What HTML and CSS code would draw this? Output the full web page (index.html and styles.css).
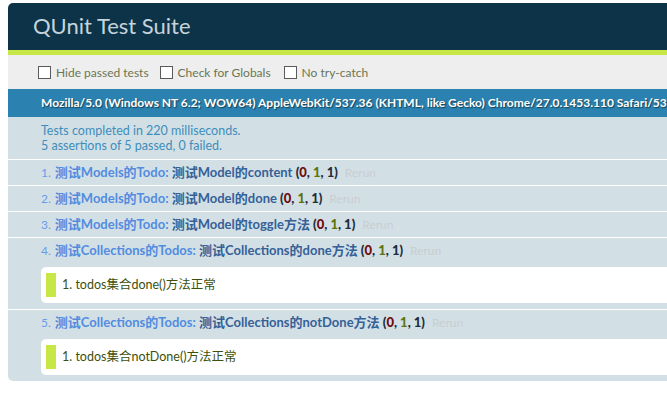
FILE: index.html
```html
<!DOCTYPE html>
<html lang="zh">
<head>
<meta charset="utf-8">
<title>QUnit Test Suite</title>
<link rel="stylesheet" href="styles.css">
</head>
<body>
<div class="suite">
  <h1 class="header">QUnit Test Suite</h1>
  <div class="banner"></div>
  <div class="toolbar">
    <label class="opt"><span class="box"></span>Hide passed tests</label>
    <label class="opt"><span class="box"></span>Check for Globals</label>
    <label class="opt"><span class="box"></span>No try-catch</label>
  </div>
  <div class="useragent">Mozilla/5.0 (Windows NT 6.2; WOW64) AppleWebKit/537.36 (KHTML, like Gecko) Chrome/27.0.1453.110 Safari/537.36</div>
  <div class="result">
    <div>Tests completed in 220 milliseconds.</div>
    <div>5 assertions of 5 passed, 0 failed.</div>
  </div>
  <ol class="tests">
    <li class="test">
      <div class="line"><span class="num">1.</span><strong><span class="module">测试Models的Todo:</span> <span class="name">测试Model的content</span> <b class="counts">(<b class="failed">0</b>, <b class="passed">1</b>, 1)</b></strong><a class="rerun">Rerun</a></div>
    </li>
    <li class="test">
      <div class="line"><span class="num">2.</span><strong><span class="module">测试Models的Todo:</span> <span class="name">测试Model的done</span> <b class="counts">(<b class="failed">0</b>, <b class="passed">1</b>, 1)</b></strong><a class="rerun">Rerun</a></div>
    </li>
    <li class="test">
      <div class="line"><span class="num">3.</span><strong><span class="module">测试Models的Todo:</span> <span class="name">测试Model的toggle方法</span> <b class="counts">(<b class="failed">0</b>, <b class="passed">1</b>, 1)</b></strong><a class="rerun">Rerun</a></div>
    </li>
    <li class="test">
      <div class="line"><span class="num">4.</span><strong><span class="module">测试Collections的Todos:</span> <span class="name">测试Collections的done方法</span> <b class="counts">(<b class="failed">0</b>, <b class="passed">1</b>, 1)</b></strong><a class="rerun">Rerun</a></div>
      <ol class="asserts">
        <li class="assert">1. todos集合done()方法正常</li>
      </ol>
    </li>
    <li class="test last">
      <div class="line"><span class="num">5.</span><strong><span class="module">测试Collections的Todos:</span> <span class="name">测试Collections的notDone方法</span> <b class="counts">(<b class="failed">0</b>, <b class="passed">1</b>, 1)</b></strong><a class="rerun">Rerun</a></div>
      <ol class="asserts">
        <li class="assert">1. todos集合notDone()方法正常</li>
      </ol>
    </li>
  </ol>
</div>
</body>
</html>
```

FILE: styles.css
```css
html, body {
  overflow: hidden;
}
body {
  margin: 3px 0 0 8px;
  background: #fff;
  font-family: Lato, "Noto Sans CJK SC", sans-serif;
  font-size: 13px;
}
.suite {
  width: 760px;
}
.header {
  margin: 0;
  padding: 11px 0 12px 25px;
  font-size: 22px;
  line-height: 24px;
  font-weight: normal;
  color: #c5d3db;
  background: #0d3349;
  border-radius: 5px 0 0 0;
}
.banner {
  height: 5px;
  background: #c6e746;
}
.toolbar {
  height: 34px;
  padding-left: 30px;
  display: flex;
  align-items: center;
  gap: 11px;
  background: #eee;
  color: #6b7553;
  font-size: 12px;
}
.opt {
  display: flex;
  align-items: center;
  gap: 5px;
}
.opt + .opt + .opt {
  margin-left: 2px;
}
.box {
  width: 11px;
  height: 11px;
  border: 1px solid #5a5a5a;
  background: #fff;
}
.useragent {
  height: 28px;
  line-height: 28px;
  padding-left: 33px;
  background: #2b81af;
  color: #fff;
  font-weight: bold;
  font-size: 12px;
  white-space: nowrap;
  text-shadow: 1px 1px 1px rgba(0, 0, 0, 0.5);
}
.result {
  height: 36px;
  padding: 6px 0 0 33px;
  background: #d2e0e6;
  color: #3f8dba;
  font-size: 12.5px;
  line-height: 15px;
  border-bottom: 1px solid #fff;
}
.tests {
  margin: 0;
  padding: 0;
  list-style: none;
}
.test {
  padding: 5px 0 5px 33px;
  background: #d2e0e6;
  color: #528ce0;
  border-bottom: 1px solid #fff;
}
.test.last {
  border-bottom: none;
  border-radius: 0 0 0 5px;
}
.line {
  line-height: 15px;
  white-space: nowrap;
}
.num {
  font-size: 12px;
  margin-right: 4px;
  color: #6b9be6;
}
.module {
  color: #528ce0;
}
.name {
  color: #366097;
}
.counts {
  color: #1f2d3d;
}
.counts .failed {
  color: #710909;
}
.counts .passed {
  color: #5e740b;
}
.rerun {
  margin-left: 7px;
  font-size: 12px;
  color: #c8cdd0;
}
.asserts {
  margin: 9px 0 1px;
  padding: 6px 5px;
  list-style: none;
  background: #fff;
  border-radius: 5px 0 0 5px;
}
.assert {
  padding: 5px 6px;
  line-height: 14px;
  border-left: 10px solid #c6e746;
  color: #3c510c;
  font-size: 12.5px;
}
```
